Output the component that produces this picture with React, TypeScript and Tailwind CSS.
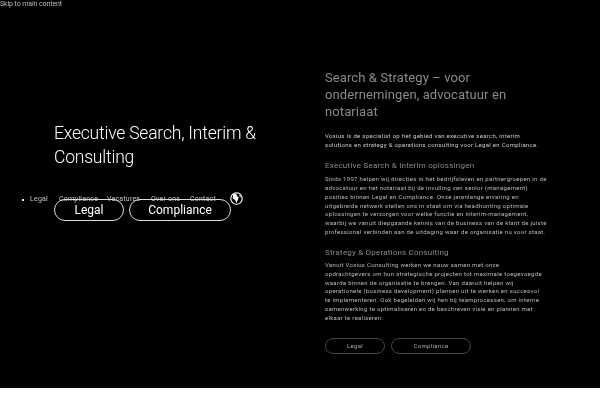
const font = "font-['Roboto',sans-serif]";

function PillLink({ label, className }: { label: string; className: string }) {
  return (
    <a href="#" className={`flex items-center justify-center border ${className}`}>
      {label}
    </a>
  );
}

function Globe() {
  return (
    <svg width="13" height="13" viewBox="0 0 13 13" className="block">
      <circle cx="6.5" cy="6.5" r="5.7" fill="#000" stroke="#fff" strokeWidth="1.1" />
      <path d="M3 2.6 6.2 1.4 7 4 8.8 5.4 7.6 8.4 6.2 11.2 5.2 8 2.8 6.4Z" fill="#fff" />
      <path d="M9 2.6 11 4.6 10.2 5.6Z" fill="#fff" />
    </svg>
  );
}

function Nav() {
  return (
    <nav className="absolute left-[22px] top-[192px] flex h-[13px] items-center text-[7px] leading-none tracking-[0.2px] text-[#c8c8c8] will-change-transform">
      <span className="mr-[6px] mt-[2px] h-[2px] w-[2px] bg-white" />
      <a href="#" className="w-[29px] pt-[2px]">Legal</a>
      <a href="#" className="w-[48px] pt-[2px]">Compliance</a>
      <a href="#" className="w-[44px] pt-[2px]">Vacatures</a>
      <a href="#" className="w-[39px] pt-[2px]">Over ons</a>
      <a href="#" className="w-[40px] pt-[2px]">Contact</a>
      <Globe />
    </nav>
  );
}

export default function App() {
  return (
    <div className={`relative h-[400px] w-[600px] overflow-hidden bg-white ${font}`}>
      <a href="#main" className="absolute left-0 top-0 text-[7px] leading-[9px] tracking-[-0.1px] text-[#bbb] will-change-transform">
        Skip to main content
      </a>
      <Nav />
      <main id="main" className="flex h-[388px] bg-black">
        <section className="w-[325px] pl-[54px] pt-[121px] will-change-transform">
          <h1 className="text-[17.5px] font-light leading-[24px] tracking-[-0.2px] text-white">
            Executive Search, Interim &amp;
            <br />
            Consulting
          </h1>
          <div className="mt-[30px] flex gap-[5px] text-[12px] text-white">
            <PillLink label="Legal" className="h-[22px] w-[70px] rounded-[11px] border-[#ddd]" />
            <PillLink label="Compliance" className="h-[22px] w-[102px] rounded-[11px] border-[#ddd]" />
          </div>
        </section>
        <section className="w-[275px] pt-[69px] text-[6px] leading-[8.7px] tracking-[0.3px] text-[#bbb] will-change-transform">
          <h2 className="text-[13px] leading-[17px] tracking-[0.1px] text-[#8a8a8a]">
            Search &amp; Strategy – voor
            <br />
            ondernemingen, advocatuur en
            <br />
            notariaat
          </h2>
          <p className="mt-[12px] text-[#ccc]">
            Voxius is de specialist op het gebied van executive search, interim
            <br />
            solutions en strategy &amp; operations consulting voor Legal en Compliance.
          </p>
          <h3 className="mt-[12px] text-[8px] leading-[10px] tracking-[0.25px] text-[#8a8a8a]">
            Executive Search &amp; Interim oplossingen
          </h3>
          <p className="mt-[4px]">
            Sinds 1997 helpen wij directies in het bedrijfsleven en partnergroepen in de
            <br />
            advocatuur en het notariaat bij de invulling van senior (management)
            <br />
            posities binnen Legal en Compliance. Onze jarenlange ervaring en
            <br />
            uitgebreide netwerk stellen ons in staat om via headhunting optimale
            <br />
            oplossingen te verzorgen voor welke functie en interim-management,
            <br />
            waarbij we vanuit diepgaande kennis van de business van de klant de juiste
            <br />
            professional verbinden aan de uitdaging waar de organisatie nu voor staat.
          </p>
          <h3 className="mt-[12px] text-[8px] leading-[10px] tracking-[0.2px] text-[#8a8a8a]">
            Strategy &amp; Operations Consulting
          </h3>
          <p className="mt-[3px]">
            Vanuit Voxius Consulting werken we nauw samen met onze
            <br />
            opdrachtgevers om hun strategische projecten tot maximale toegevoegde
            <br />
            waarde binnen de organisatie te brengen. Van daaruit helpen wij
            <br />
            operationele (business development) plannen uit te werken en succesvol
            <br />
            te implementeren. Ook begeleiden wij hen bij teamprocessen, om interne
            <br />
            samenwerking te optimaliseren en de beschreven visie en plannen met
            <br />
            elkaar te realiseren.
          </p>
          <div className="mt-[16px] flex gap-[6px] text-[#aaa]">
            <PillLink label="Legal" className="h-[16px] w-[60px] rounded-[8px] border-[#444]" />
            <PillLink label="Compliance" className="h-[16px] w-[80px] rounded-[8px] border-[#444]" />
          </div>
        </section>
      </main>
    </div>
  );
}
